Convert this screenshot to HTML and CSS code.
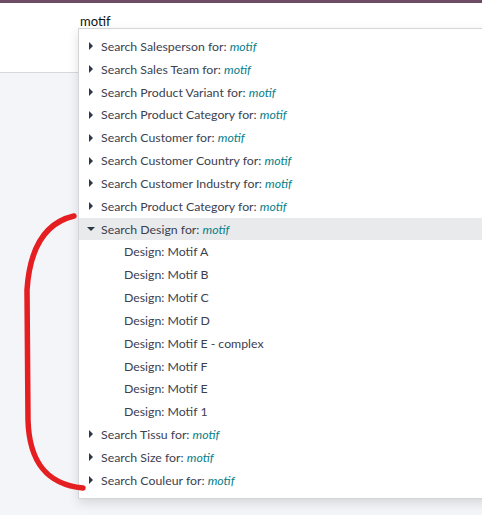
FILE: index.html
```html
<!DOCTYPE html>
<html>
<head>
<meta charset="utf-8">
<link rel="stylesheet" href="styles.css">
</head>
<body>
<div class="topbar"></div>
<div class="header">
  <div class="search">motif</div>
</div>
<div class="main"></div>
<ul class="dropdown">
  <li class="item"><span class="caret"></span>Search Salesperson for:&nbsp;<em>motif</em></li>
  <li class="item"><span class="caret"></span>Search Sales Team for:&nbsp;<em>motif</em></li>
  <li class="item"><span class="caret"></span>Search Product Variant for:&nbsp;<em>motif</em></li>
  <li class="item"><span class="caret"></span>Search Product Category for:&nbsp;<em>motif</em></li>
  <li class="item"><span class="caret"></span>Search Customer for:&nbsp;<em>motif</em></li>
  <li class="item"><span class="caret"></span>Search Customer Country for:&nbsp;<em>motif</em></li>
  <li class="item"><span class="caret"></span>Search Customer Industry for:&nbsp;<em>motif</em></li>
  <li class="item"><span class="caret"></span>Search Product Category for:&nbsp;<em>motif</em></li>
  <li class="item active"><span class="caret down"></span>Search Design for:&nbsp;<em>motif</em></li>
  <li class="item sub">Design: Motif A</li>
  <li class="item sub">Design: Motif B</li>
  <li class="item sub">Design: Motif C</li>
  <li class="item sub">Design: Motif D</li>
  <li class="item sub">Design: Motif E - complex</li>
  <li class="item sub">Design: Motif F</li>
  <li class="item sub">Design: Motif E</li>
  <li class="item sub">Design: Motif 1</li>
  <li class="item"><span class="caret"></span>Search Tissu for:&nbsp;<em>motif</em></li>
  <li class="item"><span class="caret"></span>Search Size for:&nbsp;<em>motif</em></li>
  <li class="item"><span class="caret"></span>Search Couleur for:&nbsp;<em>motif</em></li>
</ul>
<svg class="annotation" width="482" height="515" viewBox="0 0 482 515">
  <path d="M 74 216 C 48 222, 30 244, 27 290 L 28 420 C 29 456, 42 484, 83 488" fill="none" stroke="#e41e21" stroke-width="5.5" stroke-linecap="round"/>
</svg>
</body>
</html>
```
FILE: styles.css
```css
* { box-sizing: border-box; }
html, body { margin: 0; padding: 0; }
body {
  width: 482px;
  height: 515px;
  overflow: hidden;
  position: relative;
  background: #f4f5f9;
  font-family: Lato, "Open Sans", sans-serif;
  color: #3c4150;
}
.topbar {
  height: 3px;
  background: #6e4c66;
}
.header {
  height: 70px;
  background: #ffffff;
  border-bottom: 1px solid #d6d8dc;
  padding: 9px 0 0 80px;
}
.search {
  font-size: 13px;
  color: #111111;
  line-height: 18px;
}
.main { height: 441px; }
.dropdown {
  position: absolute;
  left: 78px;
  top: 28px;
  width: 420px;
  margin: 0;
  padding: 6px 0;
  list-style: none;
  background: #ffffff;
  border: 1px solid #d3d5d9;
  box-shadow: 0 4px 10px rgba(0, 0, 0, 0.12);
}
.item {
  height: 22.84px;
  display: flex;
  align-items: center;
  padding-left: 9px;
  font-size: 12.3px;
  white-space: nowrap;
}
.item em {
  color: #06808a;
  font-style: italic;
}
.item.active { background: #e9eaec; }
.item.sub { padding-left: 45px; }
.caret {
  width: 0;
  height: 0;
  border-top: 4px solid transparent;
  border-bottom: 4px solid transparent;
  border-left: 4px solid #2d3748;
  margin-right: 8px;
  margin-left: 1px;
}
.caret.down {
  border-left: 4px solid transparent;
  border-right: 4px solid transparent;
  border-top: 4px solid #2d3748;
  border-bottom: 0;
  margin-left: -1px;
  margin-right: 6px;
}
.annotation {
  position: absolute;
  left: 0;
  top: 0;
  pointer-events: none;
}
```
